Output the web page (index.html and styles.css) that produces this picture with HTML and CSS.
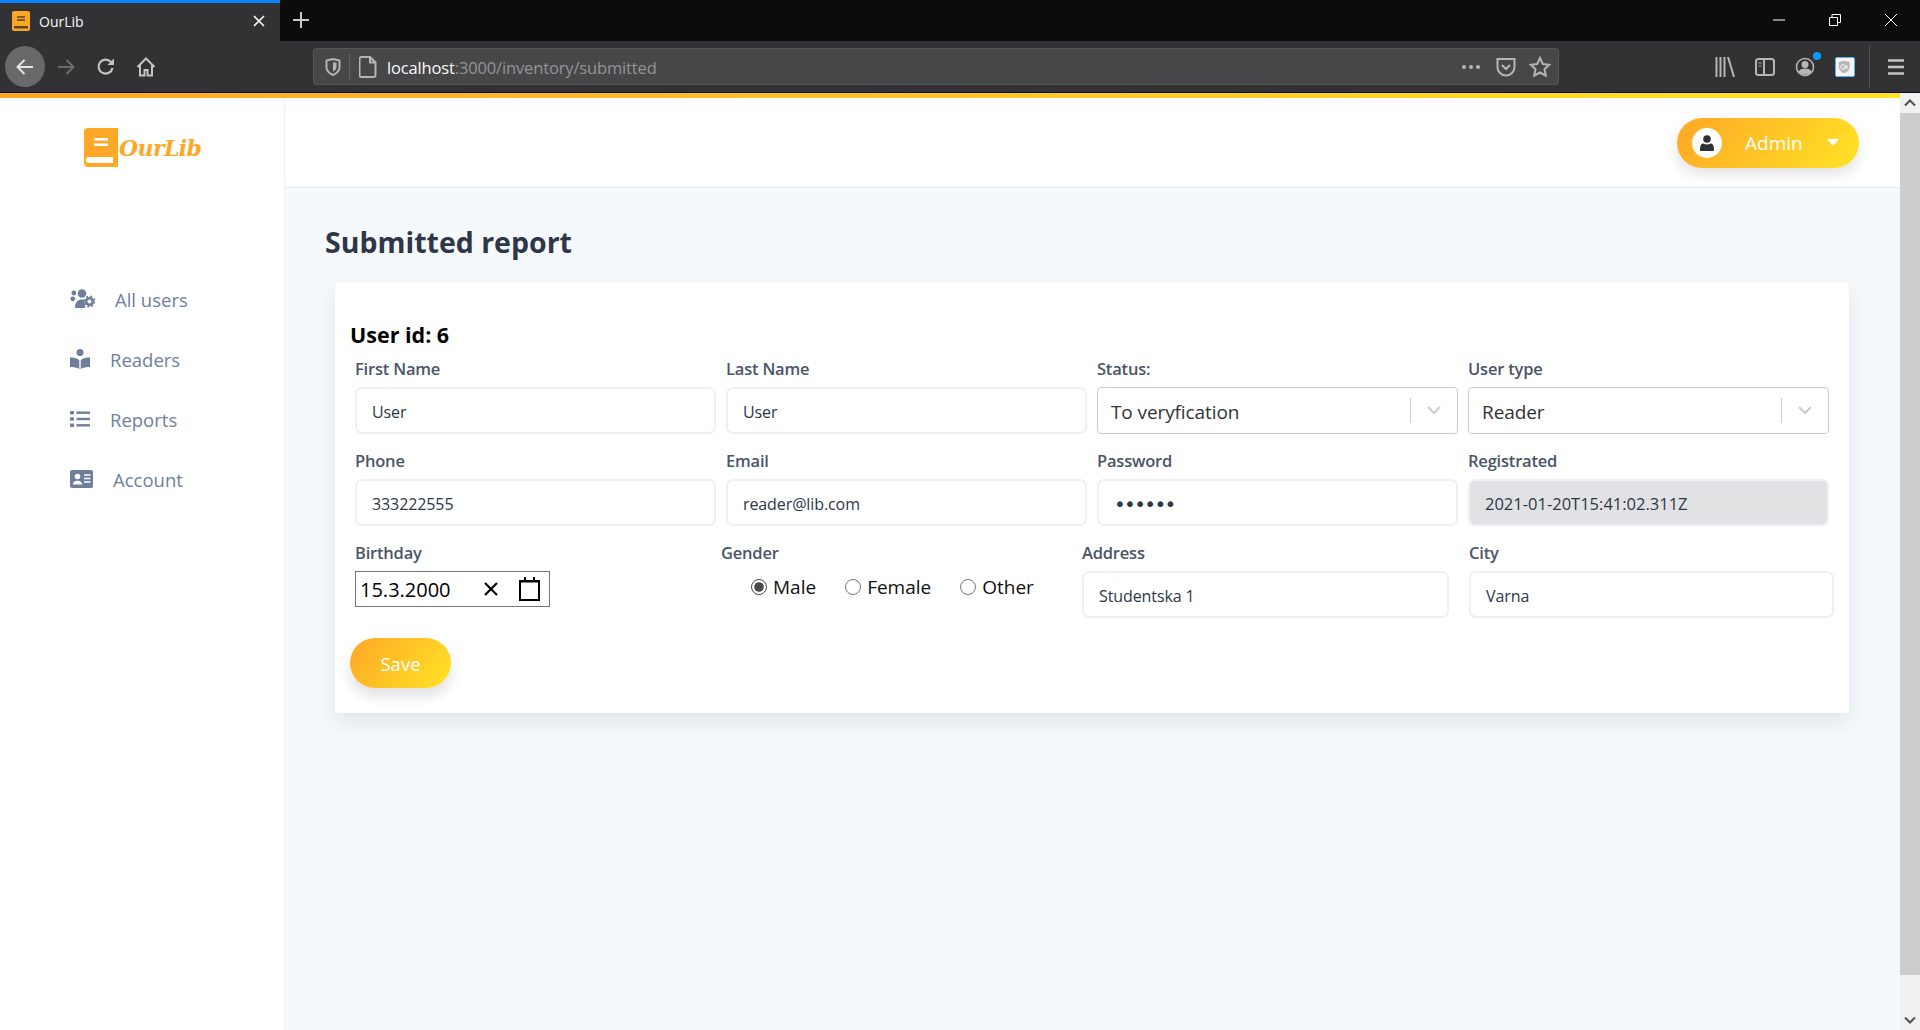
FILE: index.html
```html
<!doctype html>
<html>
    <head>
        <meta charset="utf-8"/>
        <title>OurLib</title>
        <link rel="stylesheet" href="styles.css">
    </head>
    <body>
        <header class="tabstrip">
            <div class="tab">
                <svg class="tab-icon" viewBox="0 0 18 20"><rect width="18" height="20" rx="2" fill="#fca624"/><rect x="5" y="5" width="8" height="2" fill="#7d5a22"/><rect x="5" y="8" width="8" height="2" fill="#7d5a22"/><rect x="2" y="15" width="14" height="2.5" fill="#5b4522"/></svg>
                <span class="tab-title">OurLib</span>
                <svg class="tab-close" viewBox="0 0 12 12"><path d="M1 1l10 10M11 1L1 11" stroke="#f9f9fa" stroke-width="1.6" fill="none"/></svg>
            </div>
            <svg class="new-tab" viewBox="0 0 18 18"><path d="M9 1v16M1 9h16" stroke="#c9c9ca" stroke-width="2" fill="none"/></svg>
            <div class="window-controls">
                <svg class="win-btn" viewBox="0 0 12 12"><path d="M0 6h12" stroke="#fff" fill="none"/></svg>
                <svg class="win-btn" viewBox="0 0 12 12"><path d="M.5 3.5h8v8h-8zM3 3.5V.5h8.500v8H8.500" stroke="#fff" fill="none"/></svg>
                <svg class="win-btn" viewBox="0 0 12 12"><path d="M0 0l12 12M12 0L0 12" stroke="#fff" fill="none"/></svg>
            </div>
        </header>

        <nav class="toolbar">
            <button class="back-btn">
                <svg viewBox="0 0 20 20"><path d="M18 10H3M9.500 3L2.500 10l7 7" stroke="#e4e4e5" stroke-width="2" fill="none"/></svg>
            </button>
            <svg class="tool-icon forward" viewBox="0 0 20 20"><path d="M2 10h15M10.500 3l7 7-7 7" stroke="#6c6c6e" stroke-width="2" fill="none"/></svg>
            <svg class="tool-icon reload" viewBox="0 0 20 20"><path d="M16.500 11a7 7 0 1 1-1.800-6.200L17 7" stroke="#c4c4c5" stroke-width="2.200" fill="none"/><path d="M18 1.500V8h-6.500z" fill="#c4c4c5"/></svg>
            <svg class="tool-icon home" viewBox="0 0 20 20"><path d="M1.500 10L10 1.500 18.500 10M4 8.500V18.500h4.500V13h3v5.500H16V8.500" stroke="#c4c4c5" stroke-width="2" fill="none"/></svg>

            <div class="urlbar">
                <svg class="url-shield" viewBox="0 0 16 18"><path d="M1.500 2.500L8 1l6.500 1.500V9c0 4-3 6.500-6.500 8C4.500 15.500 1.500 13 1.500 9z" stroke="#b5b5b6" stroke-width="2" fill="none"/><path d="M8 4l3.500 1v4c0 2-1.500 3.500-3.500 4.500z" fill="#b5b5b6"/></svg>
                <span class="url-sep"></span>
                <svg class="url-page" viewBox="0 0 18 22"><path d="M2.500 1h8.500l5.500 5.500V19a2 2 0 0 1-2 2h-12a2 2 0 0 1-2-2V3a2 2 0 0 1 2-2zM11 1v5.500h5.500" stroke="#b5b5b6" stroke-width="2" fill="none"/></svg>
                <span class="url-text"><b>localhost</b>:3000/inventory/submitted</span>
                <svg class="url-dots" viewBox="0 0 20 6"><circle cx="3" cy="3" r="2" fill="#b5b5b6"/><circle cx="10" cy="3" r="2" fill="#b5b5b6"/><circle cx="17" cy="3" r="2" fill="#b5b5b6"/></svg>
                <svg class="url-pocket" viewBox="0 0 20 20"><path d="M1.500 2h17v8a8.500 8.500 0 0 1-17 0z" stroke="#b5b5b6" stroke-width="2" fill="none"/><path d="M6 8l4 4 4-4" stroke="#b5b5b6" stroke-width="2" fill="none"/></svg>
                <svg class="url-star" viewBox="0 0 22 22"><path d="M11 2l2.800 6 6.500.8-4.800 4.400 1.300 6.500L11 16.500l-5.800 3.200 1.300-6.500-4.800-4.400 6.500-.8z" stroke="#b5b5b6" stroke-width="2" fill="none"/></svg>
            </div>

            <div class="toolbar-right">
                <svg class="tool-icon" viewBox="0 0 20 20"><path d="M1.500 0v20M5.500 0v20M9.500 0v20M13 0l6 20" stroke="#b5b5b6" stroke-width="2" fill="none"/></svg>
                <svg class="tool-icon" viewBox="0 0 20 20"><rect x="1" y="2" width="18" height="16" rx="2.500" stroke="#b5b5b6" stroke-width="2" fill="none"/><path d="M9 2v16" stroke="#b5b5b6" stroke-width="2"/><path d="M3.500 6h3M3.500 9h3" stroke="#b5b5b6"/></svg>
                <div class="account-icon">
                    <svg class="tool-icon" viewBox="0 0 20 20"><circle cx="10" cy="10" r="8.500" stroke="#b5b5b6" stroke-width="1.600" fill="none"/><circle cx="10" cy="7.500" r="3.500" fill="#b5b5b6"/><path d="M3.500 15c1-3 4-3.500 6.500-3.500s5.500.5 6.500 3.500c-3 3.500-10 3.500-13 0z" fill="#b5b5b6"/></svg>
                    <span class="account-dot"></span>
                </div>
                <div class="ext-icon">
                    <svg viewBox="0 0 16 18"><path d="M1 2.500L8 1l7 1.500V9c0 4-3 6.500-7 8-4-1.500-7-4-7-8z" fill="#b8b8b8"/><circle cx="6.500" cy="9" r="3" stroke="#fff" fill="none"/><circle cx="10.500" cy="9" r="1.600" stroke="#fff" fill="none"/></svg>
                </div>
                <span class="toolbar-sep"></span>
                <svg class="tool-icon menu" viewBox="0 0 20 20"><path d="M2 3.500h16M2 10h16M2 16.500h16" stroke="#c4c4c5" stroke-width="2.400" fill="none"/></svg>
            </div>
        </nav>

        <div class="viewport">
            <div class="page">
                <div class="top-stripe"></div>
                <div class="app">
                    <aside class="sidebar">
                        <div class="logo">
                            <svg class="logo-book" viewBox="0 0 34 39"><path d="M4 0h30v39H4a4 4 0 0 1-4-4V4a4 4 0 0 1 4-4z" fill="#ffa726"/><rect x="10" y="10" width="14" height="2.500" fill="#fff"/><rect x="10" y="15.500" width="14" height="2.500" fill="#fff"/><path d="M30 29H5a3 3 0 0 0 0 6h25z" fill="#fff"/><path d="M29 29h5v10h-5z" fill="#ffa726"/></svg>
                            <span class="logo-text">OurLib</span>
                        </div>
                        <ul class="menu-list">
                            <li class="menu-item item-users">
                                <svg class="menu-icon" viewBox="0 0 25 20"><circle cx="12" cy="4.500" r="4.300"/><circle cx="3.800" cy="4" r="2.400"/><circle cx="2.800" cy="9.800" r="2.400"/><path d="M5 18c0-5 3-7.500 7-7.500 1.500 0 2.500.3 3 .8-1 2-.5 5 .5 6.700-.3.700-.8 1-1.500 1H6c-.7 0-1-.3-1-1z"/><circle cx="19.500" cy="12.500" r="3.300" fill="none" stroke="#6f7f9b" stroke-width="2.600"/><circle cx="19.500" cy="12.500" r="5" fill="none" stroke="#6f7f9b" stroke-width="2" stroke-dasharray="2 1.930"/></svg>
                                <span>All users</span>
                            </li>
                            <li class="menu-item item-readers">
                                <svg class="menu-icon" viewBox="0 0 20 20"><circle cx="10" cy="3.500" r="3.500"/><path d="M0 8.500c3 0 7 .5 9.300 2.500v9C7 18.500 3 18 0 18zM20 8.500c-3 0-7 .5-9.300 2.500v9c2.300-1.500 6.300-2 9.300-2z"/></svg>
                                <span>Readers</span>
                            </li>
                            <li class="menu-item item-reports">
                                <svg class="menu-icon" viewBox="0 0 20 17"><rect width="4" height="3.400" y=".5" rx=".8"/><rect width="4" height="3.400" y="6.800" rx=".8"/><rect width="4" height="3.400" y="13.100" rx=".8"/><rect x="6.500" y="1" width="13.500" height="2.400"/><rect x="6.500" y="7.300" width="13.500" height="2.400"/><rect x="6.500" y="13.600" width="13.500" height="2.400"/></svg>
                                <span>Reports</span>
                            </li>
                            <li class="menu-item item-account">
                                <svg class="menu-icon card-icon" viewBox="0 0 23 18"><rect width="23" height="18" rx="2"/><circle cx="7.500" cy="6.500" r="2.800" fill="#fff"/><path d="M2.800 14.500c0-2.500 2-3.800 4.700-3.800s4.700 1.300 4.700 3.800z" fill="#fff"/><path d="M14 5h6.500M14 8.500h6.500M14 12h6.500" stroke="#fff" stroke-width="1.400"/></svg>
                                <span>Account</span>
                            </li>
                        </ul>
                    </aside>

                    <main class="main">
                        <div class="topbar">
                            <button class="admin-pill">
                                <span class="avatar">
                                    <svg viewBox="0 0 14 16"><circle cx="7" cy="4" r="3.800" fill="#2d3035"/><path d="M0 15c0-5 1.500-6.500 3.500-6.500 1 .7 2.300 1 3.500 1s2.500-.3 3.500-1c2 0 3.500 1.500 3.500 6.500 0 .7-.5 1-1 1H1c-.5 0-1-.3-1-1z" fill="#2d3035"/></svg>
                                </span>
                                <span class="admin-name">Admin</span>
                                <span class="caret"></span>
                            </button>
                        </div>

                        <section class="content">
                            <h1 class="page-title">Submitted report</h1>
                            <div class="card">
                                <h3 class="user-id">User id: 6</h3>
                                <div class="fields">
                                    <div class="field">
                                        <label>First Name</label>
                                        <input class="text-input" type="text" value="User">
                                    </div>
                                    <div class="field">
                                        <label>Last Name</label>
                                        <input class="text-input" type="text" value="User">
                                    </div>
                                    <div class="field">
                                        <label>Status:</label>
                                        <div class="select-box">
                                            <span class="select-value">To veryfication</span>
                                            <span class="select-sep"></span>
                                            <svg class="select-arrow" viewBox="0 0 14 9"><path d="M1 1l6 6 6-6" stroke="#ccc" stroke-width="2" fill="none"/></svg>
                                        </div>
                                    </div>
                                    <div class="field">
                                        <label>User type</label>
                                        <div class="select-box">
                                            <span class="select-value">Reader</span>
                                            <span class="select-sep"></span>
                                            <svg class="select-arrow" viewBox="0 0 14 9"><path d="M1 1l6 6 6-6" stroke="#ccc" stroke-width="2" fill="none"/></svg>
                                        </div>
                                    </div>
                                    <div class="field">
                                        <label>Phone</label>
                                        <input class="text-input" type="text" value="333222555">
                                    </div>
                                    <div class="field">
                                        <label>Email</label>
                                        <input class="text-input" type="text" value="reader@lib.com">
                                    </div>
                                    <div class="field">
                                        <label>Password</label>
                                        <input class="text-input password" type="password" value="reader">
                                    </div>
                                    <div class="field">
                                        <label>Registrated</label>
                                        <input class="text-input disabled" type="text" value="2021-01-20T15:41:02.311Z" disabled>
                                    </div>
                                </div>

                                <div class="fields-last">
                                    <div class="field">
                                        <label>Birthday</label>
                                        <div class="date-box">
                                            <span class="date-value">15.3.2000</span>
                                            <svg class="date-clear" viewBox="0 0 14 14"><path d="M1 1l12 12M13 1L1 13" stroke="#000" stroke-width="2.200" fill="none"/></svg>
                                            <svg class="date-cal" viewBox="0 0 21 24"><path d="M1 4h19v19H1z" stroke="#000" stroke-width="2" fill="none"/><path d="M1 4h19v1.500H1zM5 0h2v4H5zM14 0h2v4h-2z" fill="#000"/></svg>
                                        </div>
                                    </div>
                                    <div class="field">
                                        <label>Gender</label>
                                        <div class="radios">
                                            <label class="radio"><input type="radio" name="gender" checked>Male</label>
                                            <label class="radio"><input type="radio" name="gender">Female</label>
                                            <label class="radio"><input type="radio" name="gender">Other</label>
                                        </div>
                                    </div>
                                    <div class="field address">
                                        <label>Address</label>
                                        <input class="text-input" type="text" value="Studentska 1">
                                    </div>
                                    <div class="field">
                                        <label>City</label>
                                        <input class="text-input" type="text" value="Varna">
                                    </div>
                                </div>

                                <button class="save-btn">Save</button>
                            </div>
                        </section>
                    </main>
                </div>
            </div>

            <div class="scrollbar">
                <svg class="scroll-arrow" viewBox="0 0 20 20"><path d="M5 12.500l5-5 5 5" stroke="#505050" stroke-width="2" fill="none"/></svg>
                <div class="scroll-track"><div class="scroll-thumb"></div></div>
                <svg class="scroll-arrow" viewBox="0 0 20 20"><path d="M5 7.500l5 5 5-5" stroke="#505050" stroke-width="2" fill="none"/></svg>
            </div>
        </div>
    </body>
</html>
```

FILE: styles.css
```css
:root {
    --chrome: #323234;
    --chrome-dark: #0c0c0d;
    --grad: linear-gradient(125deg, #ffa726, #ffe326);
    --slate: #6f7f9b;
    --label: #4a5568;
    --line: #e2e8f0;
}

* {
    box-sizing: border-box;
}

html, body {
    height: 100%;
}

body {
    margin: 0;
    display: flex;
    flex-direction: column;
    overflow: hidden;
    font-family: "Open Sans", "Noto Sans", sans-serif;
    background: #fff;
}

/* browser chrome */
.tabstrip {
    height: 41px;
    flex: none;
    display: flex;
    align-items: flex-start;
    background: var(--chrome-dark);
}

.tab {
    width: 280px;
    height: 41px;
    display: flex;
    align-items: center;
    padding: 0 15px 2px 12px;
    background: var(--chrome);
    border-top: 3px solid #0a84ff;
}

.tab-icon {
    width: 18px;
    height: 20px;
}

.tab-title {
    margin-left: 9px;
    font-size: 14px;
    color: #f9f9fa;
    flex: 1;
}

.tab-close {
    width: 12px;
    height: 12px;
}

.new-tab {
    width: 18px;
    height: 18px;
    margin: 11px 0 0 12px;
}

.window-controls {
    margin-left: auto;
    display: flex;
    gap: 44px;
    padding: 14px 23px 0 0;
}

.win-btn {
    width: 12px;
    height: 12px;
}

.toolbar {
    height: 52px;
    flex: none;
    display: flex;
    align-items: center;
    padding-left: 5px;
    background: var(--chrome);
    border-bottom: 1px solid var(--chrome-dark);
}

.back-btn {
    width: 40px;
    height: 41px;
    padding: 0;
    flex: none;
    border: 0;
    border-radius: 50%;
    background: #69696b;
    display: flex;
    align-items: center;
    justify-content: center;
}

.back-btn svg {
    width: 20px;
    height: 20px;
}

.tool-icon {
    width: 20px;
    height: 20px;
    flex: none;
}

.forward {
    margin-left: 11px;
}

.reload {
    margin-left: 20px;
}

.home {
    margin-left: 20px;
}

.urlbar {
    width: 1246px;
    height: 37px;
    flex: none;
    margin-left: 157px;
    display: flex;
    align-items: center;
    padding-left: 11px;
    background: #474749;
    border: 1px solid #57575a;
    border-radius: 3px;
}

.url-shield {
    width: 16px;
    height: 18px;
    flex: none;
}

.url-sep {
    width: 1px;
    height: 25px;
    margin: 0 9px 0 8px;
    background: #626264;
}

.url-page {
    width: 18px;
    height: 22px;
    flex: none;
}

.url-text {
    flex: 1;
    margin-left: 10px;
    padding-top: 2px;
    font-size: 16.500px;
    letter-spacing: -.15px;
    color: #949496;
}

.url-text b {
    font-weight: 400;
    color: #f9f9fa;
}

.url-dots {
    width: 20px;
    height: 6px;
    margin-right: 15px;
}

.url-pocket {
    width: 20px;
    height: 20px;
    margin-right: 13px;
}

.url-star {
    width: 22px;
    height: 22px;
    margin-right: 7px;
}

.toolbar-right {
    margin-left: 156px;
    display: flex;
    align-items: center;
    gap: 20px;
}

.account-icon {
    position: relative;
    width: 20px;
    height: 20px;
}

.account-dot {
    position: absolute;
    top: -5px;
    right: -6px;
    width: 8px;
    height: 8px;
    border-radius: 50%;
    background: #0a9dff;
}

.ext-icon {
    width: 20px;
    height: 20px;
    padding: 2px;
    background: #f4f4f4;
    border: 1px solid #5ab4ea;
    border-radius: 2px;
    display: flex;
}

.toolbar-sep {
    width: 1px;
    height: 42px;
    margin: 0 -6px 0 -6px;
    background: #58585a;
}

.menu {
    margin-left: 2px;
}

/* page */
.viewport {
    flex: 1;
    min-height: 0;
    display: flex;
}

.page {
    flex: 1;
    min-width: 0;
    display: flex;
    flex-direction: column;
}

.top-stripe {
    height: 5px;
    flex: none;
    background: linear-gradient(90deg, #ffa726, #ffe326);
}

.app {
    flex: 1;
    min-height: 0;
    display: flex;
}

.sidebar {
    width: 285px;
    flex: none;
    background: #fff;
    border-right: 1px solid #edf2f7;
}

.logo {
    height: 39px;
    margin: 30px 0 0 84px;
    display: flex;
    align-items: center;
}

.logo-book {
    width: 34px;
    height: 39px;
    flex: none;
}

.logo-text {
    margin-left: 1px;
    font-family: "DejaVu Serif", serif;
    font-style: italic;
    font-weight: 700;
    font-size: 22px;
    letter-spacing: -.6px;
    color: #ffa726;
}

.menu-list {
    list-style: none;
    margin: 102px 0 0;
    padding: 0;
}

.menu-item {
    height: 60px;
    display: flex;
    align-items: center;
    padding-left: 70px;
    font-size: 18.500px;
    color: var(--slate);
}

.menu-icon {
    width: 20px;
    height: 20px;
    flex: none;
    fill: var(--slate);
}

.item-users .menu-icon {
    width: 25px;
}

.item-users span {
    margin-left: 20px;
}

.item-readers span,
.item-reports span {
    margin-left: 20px;
}

.card-icon {
    width: 23px;
    height: 18px;
}

.item-account span {
    margin-left: 20px;
}

.main {
    flex: 1;
    min-width: 0;
    background: #f5f9fc;
}

.topbar {
    height: 90px;
    display: flex;
    align-items: center;
    justify-content: flex-end;
    padding-right: 41px;
    background: #fff;
    border-bottom: 1px solid var(--line);
}

.admin-pill {
    width: 182px;
    height: 50px;
    display: flex;
    align-items: center;
    padding: 0 20px 0 15px;
    border: 0;
    border-radius: 25px;
    background: var(--grad);
    box-shadow: 0 6px 14px rgba(0, 0, 0, .12);
    font-family: inherit;
}

.avatar {
    width: 30px;
    height: 30px;
    flex: none;
    border-radius: 50%;
    background: #fff;
    display: flex;
    align-items: center;
    justify-content: center;
}

.avatar svg {
    width: 14px;
    height: 16px;
}

.admin-name {
    margin-left: 23px;
    font-size: 19px;
    color: #fff;
}

.caret {
    margin-left: auto;
    border-left: 6.500px solid transparent;
    border-right: 6.500px solid transparent;
    border-top: 7px solid #fff;
}

.content {
    padding: 0 41px 0 40px;
}

.page-title {
    margin: 0;
    padding-top: 35px;
    height: 95px;
    font-size: 28.500px;
    line-height: 38px;
    font-weight: 700;
    color: #2d3748;
}

.card {
    margin: 0 10px;
    height: 430px;
    padding: 37px 15px 25px;
    background: #fff;
    border-radius: 4px;
    box-shadow: 0 10px 20px rgba(45, 55, 72, .1);
}

.user-id {
    margin: 0 0 7px;
    font-size: 21.500px;
    line-height: 30px;
    font-weight: 700;
    color: #000;
}

.fields,
.fields-last {
    margin-left: 5px;
    display: grid;
    column-gap: 10px;
    row-gap: 15px;
}

.fields {
    grid-template-columns: repeat(4, 361px);
    margin-bottom: 15px;
}

.fields-last {
    grid-template-columns: 356px 351px 377px 365px;
}

.fields-last .address {
    padding-right: 10px;
}

.field > label:first-child {
    display: block;
    height: 24px;
    margin-bottom: 6px;
    font-size: 16.500px;
    line-height: 24px;
    font-weight: 600;
    color: var(--label);
    letter-spacing: -.2px;
}

.text-input {
    display: block;
    width: 100%;
    height: 47px;
    padding: 2px 15px 0;
    border: 2px solid #edf0f5;
    border-radius: 7px;
    background: #fff;
    font-family: inherit;
    font-size: 16px;
    letter-spacing: -.1px;
    color: #2d3748;
    outline: none;
}

.text-input.disabled {
    background: #e2e2e4;
    color: #2d3748;
    font-size: 16.500px;
    letter-spacing: 0;
}

.text-input.password {
    font-family: "DejaVu Sans", sans-serif;
    font-size: 20px;
    letter-spacing: -1.700px;
}

.select-box {
    height: 47px;
    display: flex;
    align-items: center;
    padding: 2px 16px 0 13px;
    border: 1px solid #ccc;
    border-radius: 4px;
    background: #fff;
}

.select-value {
    flex: 1;
    font-size: 19px;
    letter-spacing: -.1px;
    color: #333;
}

.select-sep {
    width: 1px;
    height: 25px;
    margin: -3px 16px 0 0;
    background: #ccc;
}

.select-arrow {
    width: 14px;
    height: 9px;
    margin-top: -3px;
}

.date-box {
    width: 195px;
    height: 36px;
    display: flex;
    align-items: center;
    padding: 0 9px 0 4px;
    border: 1px solid #767676;
}

.date-value {
    flex: 1;
    font-size: 20px;
    color: #000;
}

.date-clear {
    width: 14px;
    height: 14px;
    margin-right: 21px;
}

.date-cal {
    width: 21px;
    height: 24px;
}

.radios {
    display: flex;
    gap: 29px;
    padding: 3px 0 0 30px;
}

.radio {
    display: flex;
    align-items: center;
    gap: 6px;
    font-size: 19px;
    line-height: 26px;
    color: #111;
}

.radio input {
    width: 16px;
    height: 16px;
    margin: 0;
    accent-color: #4a4a4a;
}

.save-btn {
    display: block;
    width: 101px;
    height: 50px;
    margin-top: 20px;
    border: 0;
    border-radius: 25px;
    background: var(--grad);
    box-shadow: 0 8px 14px rgba(0, 0, 0, .12);
    font-family: inherit;
    font-size: 18.500px;
    color: #fff;
}

/* page scrollbar */
.scrollbar {
    width: 20px;
    flex: none;
    display: flex;
    flex-direction: column;
    background: #f0f0f0;
}

.scroll-arrow {
    width: 20px;
    height: 20px;
    flex: none;
}

.scroll-track {
    flex: 1;
    min-height: 0;
}

.scroll-thumb {
    height: 862px;
    background: #cdcdcd;
}
```
